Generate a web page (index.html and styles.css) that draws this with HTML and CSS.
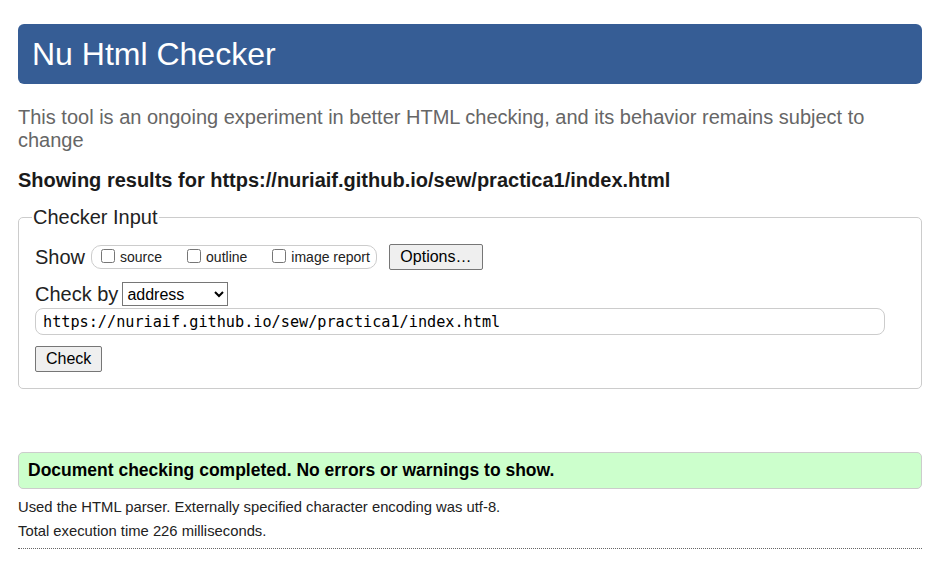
FILE: index.html
```html
<!DOCTYPE html>
<html lang="en">
<head>
<meta charset="utf-8">
<title>Nu Html Checker</title>
<link rel="stylesheet" href="styles.css">
</head>
<body>
<h1 class="title">Nu Html Checker</h1>
<p class="intro">This tool is an ongoing experiment in better HTML checking, and its behavior remains subject to change</p>
<p class="showing">Showing results for https://nuriaif.github.io/sew/practica1/index.html</p>
<form class="form">
  <fieldset class="fieldset">
    <legend class="legend">Checker Input</legend>
    <div class="row">
      <span class="label">Show</span>
      <span class="group">
        <label class="opt"><input type="checkbox" class="cb"><span>source</span></label>
        <label class="opt"><input type="checkbox" class="cb"><span>outline</span></label>
        <label class="opt"><input type="checkbox" class="cb"><span>image report</span></label>
      </span>
      <button type="button" class="btn btn-options">Options…</button>
    </div>
    <div class="row row-check">
      <span class="label">Check by</span>
      <select class="select"><option>address</option></select>
    </div>
    <input class="url" type="text" value="https://nuriaif.github.io/sew/practica1/index.html">
    <div class="row row-submit">
      <button type="button" class="btn btn-check">Check</button>
    </div>
  </fieldset>
</form>
<div class="success">Document checking completed. No errors or warnings to show.</div>
<p class="details">Used the HTML parser. Externally specified character encoding was utf-8.</p>
<p class="details details-time">Total execution time 226 milliseconds.</p>
<hr class="rule">
</body>
</html>
```
FILE: styles.css
```css
html, body {
  margin: 0;
  padding: 0;
  background: #fff;
}
body {
  font-family: "Liberation Sans", Arial, sans-serif;
  color: #222;
  padding: 24px 19px 0 18px;
}
.title {
  margin: 0;
  height: 60px;
  box-sizing: border-box;
  background: #365d95;
  color: #fff;
  border-radius: 6px;
  font-size: 32px;
  font-weight: normal;
  line-height: 60px;
  padding: 0 14px;
}
.intro {
  margin: 22px 0 0;
  font-size: 20px;
  line-height: 23px;
  color: #666;
}
.showing {
  margin: 17px 0 0;
  font-size: 20px;
  line-height: 23px;
  font-weight: bold;
  color: #1a1a1a;
}
.form {
  margin: 14px 0 0;
}
.fieldset {
  margin: 0;
  padding: 15px 16px 16px 16px;
  border: 1px solid #ccc;
  border-radius: 5px;
}
.legend {
  font-size: 20px;
  padding: 0 1px;
  margin-left: -3px;
  color: #222;
}
.row {
  display: flex;
  align-items: center;
}
.label {
  font-size: 20px;
  color: #222;
}
.group {
  display: inline-flex;
  align-items: center;
  margin-left: 6px;
  height: 24px;
  box-sizing: border-box;
  border: 1px solid #ccc;
  border-radius: 10px;
  padding: 0 6px 0 9px;
  gap: 25px;
}
.opt {
  display: inline-flex;
  align-items: center;
  font-size: 14px;
  color: #222;
}
.cb {
  margin: 0 5px 3px 0;
  width: 14px;
  height: 14px;
}
.btn {
  font-family: "Liberation Sans", Arial, sans-serif;
  font-size: 16px;
  color: #000;
  background: #efefef;
  border: 1px solid #767676;
  border-radius: 2px;
  padding: 0 10px;
  height: 26px;
}
.btn-options {
  margin-left: 12px;
  width: 94px;
}
.row-check {
  margin-top: 12px;
}
.select {
  margin-left: 4px;
  font-family: "Liberation Sans", Arial, sans-serif;
  font-size: 16px;
  height: 24px;
  width: 106px;
  border: 1px solid #767676;
  border-radius: 0;
  background: #fff;
  color: #000;
}
.url {
  display: block;
  margin-top: 2px;
  width: 850px;
  height: 27px;
  box-sizing: border-box;
  border: 1px solid #ccc;
  border-radius: 8px;
  padding: 0 7px;
  font-family: "DejaVu Sans Mono", "Liberation Mono", monospace;
  font-size: 15.2px;
  color: #000;
  background: #fff;
}
.row-submit {
  margin-top: 11px;
}
.btn-check {
  padding: 0 10px;
  width: 67px;
}
.success {
  margin-top: 63px;
  height: 37px;
  box-sizing: border-box;
  background: #ccffcc;
  border: 1px solid #ccc;
  border-radius: 5px;
  padding: 0 9px;
  font-size: 17.5px;
  line-height: 35px;
  font-weight: bold;
  color: #000;
}
.details {
  margin: 10px 0 0;
  font-size: 14.8px;
  line-height: 17px;
  color: #222;
}
.details-time {
  margin-top: 7px;
}
.rule {
  margin: 8px 0 0;
  border: 0;
  border-top: 1px dotted #666;
  height: 0;
}
```
